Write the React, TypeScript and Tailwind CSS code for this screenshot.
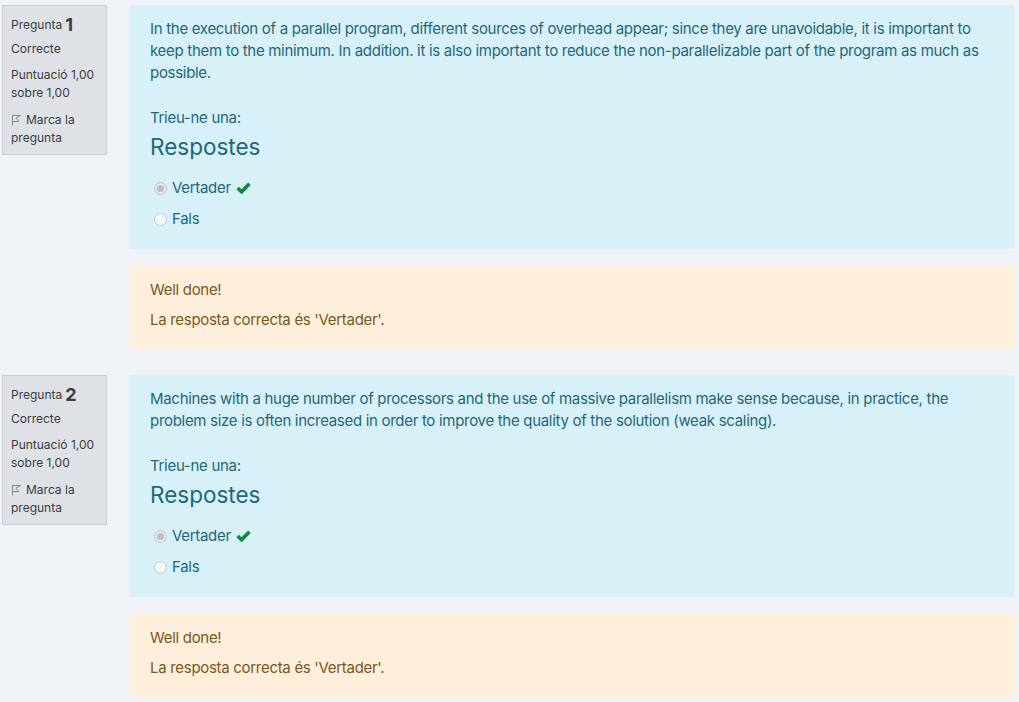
const questions = [
  {
    num: 1,
    text: "In the execution of a parallel program, different sources of overhead appear; since they are unavoidable, it is important to keep them to the minimum. In addition. it is also important to reduce the non-parallelizable part of the program as much as possible.",
  },
  {
    num: 2,
    text: "Machines with a huge number of processors and the use of massive parallelism make sense because, in practice, the problem size is often increased in order to improve the quality of the solution (weak scaling).",
  },
];

const FlagIcon = () => (
  <svg width="11" height="12" viewBox="0 0 11 12" className="inline-block mr-[4px] -mt-[2px]">
    <path d="M1.5 1 L1.5 11.5" stroke="#85898c" strokeWidth="1" fill="none" />
    <path d="M1.5 1.5 L9.5 1.5 L5 4.2 L8 7.5 L1.5 7.5" stroke="#85898c" strokeWidth="1" fill="none" strokeLinejoin="round" />
  </svg>
);

const CheckIcon = () => (
  <svg width="15" height="12" viewBox="0 0 15 12" className="ml-[5px]">
    <path d="M1.6 6 L5.6 9.8 L13.4 1.8" stroke="#0e8a3a" strokeWidth="3.6" fill="none" strokeLinecap="butt" strokeLinejoin="miter" />
  </svg>
);

const Radio = ({ checked }: { checked?: boolean }) => (
  <span
    className={
      "inline-flex items-center justify-center w-[13px] h-[13px] rounded-full border " +
      (checked ? "bg-[#e6e8ea] border-[#bfc3c6]" : "bg-[#f7f8f9] border-[#c3c7ca]")
    }
  >
    {checked && <span className="w-[7px] h-[7px] rounded-full bg-[#bcc0c3]" />}
  </span>
);

const Question = ({ num, text }: { num: number; text: string }) => (
  <div className="flex gap-[23px] mr-[4px]">
    <div className="w-[105px] shrink-0 self-start bg-[#dee2e6] border border-[#c9cdd1] pl-[8px] pr-[6px] pt-[6px] pb-[7px] text-[12px] leading-[18px] text-[#3a3d40]">
      <div className="h-[26px] flex items-center">
        <span>Pregunta</span>
        <span className="text-[18px] font-bold ml-[3px]">{num}</span>
      </div>
      <div className="mt-[2px]">Correcte</div>
      <div className="mt-[8px]">Puntuació 1,00 sobre 1,00</div>
      <div className="mt-[9px]">
        <FlagIcon />
        Marca la pregunta
      </div>
    </div>
    <div className="flex-1 flex flex-col gap-[17px]">
      <div className="bg-[#d8f1f9] text-[#1d687b] pt-[13px] pb-[19px] px-[20px] text-[15px] leading-[22px] tracking-[-0.3px]">
        <p>{text}</p>
        <div className="mt-[23px]">Trieu-ne una:</div>
        <div className="mt-[4px] text-[22.5px] leading-[27px] tracking-normal">Respostes</div>
        <div className="mt-[17px] flex items-center h-[22px] pl-[4px]">
          <Radio checked />
          <span className="ml-[5px]">Vertader</span>
          <CheckIcon />
        </div>
        <div className="mt-[9px] flex items-center h-[22px] pl-[4px]">
          <Radio />
          <span className="ml-[5px]">Fals</span>
        </div>
      </div>
      <div className="bg-[#fdefdb] text-[#7b571e] pt-[13px] pb-[18px] px-[20px] text-[15px] leading-[22px] tracking-[-0.3px]">
        <div>Well done!</div>
        <div className="mt-[8px]">La resposta correcta és 'Vertader'.</div>
      </div>
    </div>
  </div>
);

export default function App() {
  return (
    <div className="min-h-screen bg-[#eff2f6] pt-[5px] pl-[2px] font-['Inter','Noto_Sans',sans-serif]">
      <div className="flex flex-col gap-[26px]">
        {questions.map((q) => (
          <Question key={q.num} num={q.num} text={q.text} />
        ))}
      </div>
    </div>
  );
}
